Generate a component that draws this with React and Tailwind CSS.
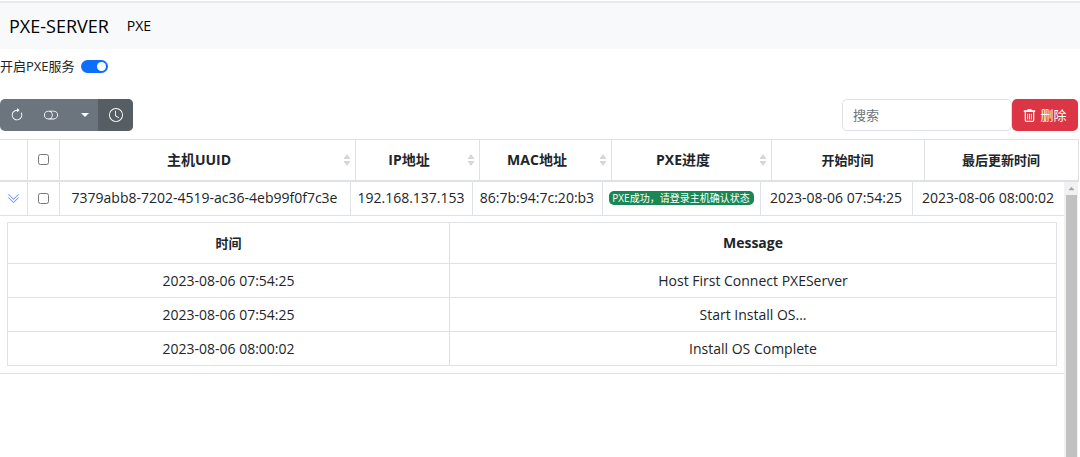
import { useState } from "react";
import {
  BsArrowClockwise,
  BsCaretUpFill,
  BsChevronDoubleDown,
  BsClock,
  BsToggleOff,
} from "react-icons/bs";

const columns = [
  { title: "主机UUID", sortable: true },
  { title: "IP地址", sortable: true },
  { title: "MAC地址", sortable: true },
  { title: "PXE进度", sortable: true },
  { title: "开始时间" },
  { title: "最后更新时间" },
];

const hosts = [
  {
    uuid: "7379abb8-7202-4519-ac36-4eb99f0f7c3e",
    ip: "192.168.137.153",
    mac: "86:7b:94:7c:20:b3",
    status: "PXE成功，请登录主机确认状态",
    start: "2023-08-06 07:54:25",
    update: "2023-08-06 08:00:02",
    logs: [
      { time: "2023-08-06 07:54:25", message: "Host First Connect PXEServer" },
      { time: "2023-08-06 07:54:25", message: "Start Install OS..." },
      { time: "2023-08-06 08:00:02", message: "Install OS Complete" },
    ],
  },
];

function SortIcon() {
  return (
    <svg viewBox="0 0 8 12" className="h-3 w-2 shrink-0 fill-[#d6d6d6]" aria-hidden="true">
      <path d="M4 0 7.5 5h-7zM4 12 .5 7h7z" />
    </svg>
  );
}

function TrashIcon() {
  return (
    <svg viewBox="0 0 13 13" className="size-[13px]" fill="none" stroke="currentColor" aria-hidden="true">
      <path d="M.8 2.2h11.4M4.5 1h4" strokeWidth="1.8" />
      <path d="M2.3 3v8.2q0 1.1 1.1 1.1h6.2q1.1 0 1.1-1.1V3" strokeWidth="1.2" />
      <path d="M4.6 4.8v5.6M6.5 4.8v5.6M8.4 4.8v5.6" strokeWidth="0.9" />
    </svg>
  );
}

function LogTable({ logs }) {
  return (
    <table className="w-full table-fixed border-collapse text-center">
      <colgroup>
        <col className="w-[442px]" />
        <col className="w-[607px]" />
      </colgroup>
      <thead>
        <tr className="h-[41px]">
          <th className="border border-[#dee2e6] text-[13px] font-bold">时间</th>
          <th className="border border-[#dee2e6] font-bold">Message</th>
        </tr>
      </thead>
      <tbody>
        {logs.map((log, index) => (
          <tr key={index} className="h-[34px]">
            <td className="border border-[#dee2e6]">{log.time}</td>
            <td className="border border-[#dee2e6]">{log.message}</td>
          </tr>
        ))}
      </tbody>
    </table>
  );
}

export default function App() {
  const [enabled, setEnabled] = useState(true);
  const [open, setOpen] = useState(true);
  const [search, setSearch] = useState("");

  return (
    <div className="flex min-h-screen flex-col bg-white pr-0.5 font-['Open_Sans','Noto_Sans_CJK_SC',sans-serif] text-[14px] leading-5 text-[#212529]">
      {/* Navbar */}
      <nav className="-mr-0.5 mt-px flex h-12 items-center gap-[18px] border-t-2 border-[#e9ecef] bg-[#f8f9fa] px-[9px]">
        <a href="#" className="text-[18px] text-black">PXE-SERVER</a>
        <a href="#" className="text-black">PXE</a>
      </nav>

      {/* Service switch */}
      <div className="flex h-[34px] items-center gap-1.5">
        <label htmlFor="pxe-service" className="text-[13px]">开启PXE服务</label>
        <input
          id="pxe-service"
          type="checkbox"
          role="switch"
          checked={enabled}
          onChange={(e) => setEnabled(e.target.checked)}
          className="flex h-[13px] w-[27px] appearance-none items-center justify-start rounded-full bg-gray-300 px-0.5 before:size-[9px] before:rounded-full before:bg-white checked:justify-end checked:bg-[#0d6efd]"
        />
      </div>

      {/* Toolbar */}
      <div className="mt-4 flex items-center justify-between">
        <div className="flex h-8 overflow-hidden rounded-[5px] bg-[#6c757d] text-white">
          <button aria-label="刷新" className="flex w-[34px] items-center justify-center">
            <BsArrowClockwise size={14} />
          </button>
          <button aria-label="切换视图" className="flex w-[34px] items-center justify-center">
            <BsToggleOff size={14} />
          </button>
          <button aria-label="列" className="flex w-[30px] items-center justify-center pl-1">
            <svg viewBox="0 0 8 4" className="h-1 w-2 fill-white" aria-hidden="true">
              <path d="M0 0h8L4 4z" />
            </svg>
          </button>
          <button aria-label="自动刷新" className="flex w-[35px] items-center justify-center bg-[#565e64]">
            <BsClock size={14} />
          </button>
        </div>
        <div className="flex h-8">
          <input
            type="search"
            aria-label="搜索"
            placeholder="搜索"
            value={search}
            onChange={(e) => setSearch(e.target.value)}
            className="w-[170px] rounded-[5px] border border-[#dee2e6] px-2.5 text-[13px] placeholder:text-[#6c757d]"
          />
          <button className="flex w-[66px] items-center justify-center gap-1 rounded-[5px] bg-[#dc3545] text-[13px] text-white">
            <TrashIcon />
            删除
          </button>
        </div>
      </div>

      {/* Fixed table header */}
      <table className="mt-2 w-full table-fixed border-collapse">
        <colgroup>
          <col className="w-[27px]" />
          <col className="w-[32px]" />
          <col className="w-[296px]" />
          <col className="w-[124px]" />
          <col className="w-[132px]" />
          <col className="w-[160px]" />
          <col className="w-[153px]" />
          <col className="w-[154px]" />
        </colgroup>
        <thead>
          <tr className="h-[41px] border-t border-b-2 border-[#dee2e6]">
            <th className="border-r border-[#dee2e6]"></th>
            <th className="border-r border-[#dee2e6]">
              <input type="checkbox" aria-label="全选" className="mx-auto block size-[11px]" />
            </th>
            {columns.map((col) => (
              <th key={col.title} className="border-r border-[#dee2e6] px-1 font-bold">
                <div className="flex items-center">
                  <span className={col.sortable ? "flex-1 pr-2" : "flex-1 text-[13px]"}>{col.title}</span>
                  {col.sortable && <SortIcon />}
                </div>
              </th>
            ))}
          </tr>
        </thead>
      </table>

      {/* Scrolling body */}
      <div className="flex flex-1">
        <div className="min-w-0 flex-1">
          <table className="w-full table-fixed border-collapse text-center">
            <colgroup>
              <col className="w-[27px]" />
              <col className="w-[32px]" />
              <col className="w-[291px]" />
              <col className="w-[122px]" />
              <col className="w-[130px]" />
              <col className="w-[158px]" />
              <col className="w-[152px]" />
              <col className="w-[152px]" />
            </colgroup>
            <tbody>
              {hosts.map((host) => [
                <tr key={host.uuid} className="h-[34px] border-b border-[#dee2e6]">
                  <td className="border-r border-[#dee2e6]">
                    <button
                      aria-label="展开"
                      onClick={() => setOpen(!open)}
                      className="mx-auto block text-[#5c85ff]"
                    >
                      <BsChevronDoubleDown size={13} />
                    </button>
                  </td>
                  <td className="border-r border-[#dee2e6]">
                    <input type="checkbox" aria-label={host.uuid} className="mx-auto block size-[11px]" />
                  </td>
                  <td className="border-r border-[#dee2e6]">{host.uuid}</td>
                  <td className="border-r border-[#dee2e6]">{host.ip}</td>
                  <td className="border-r border-[#dee2e6]">{host.mac}</td>
                  <td className="border-r border-[#dee2e6]">
                    <span className="mx-auto block h-3.5 w-[145px] rounded-[5px] bg-[#198754] text-[10px] leading-[14px] whitespace-nowrap text-white">
                      {host.status}
                    </span>
                  </td>
                  <td className="border-r border-[#dee2e6]">{host.start}</td>
                  <td className="border-r border-[#dee2e6]">{host.update}</td>
                </tr>,
                open && (
                  <tr key={host.uuid + "-detail"} className="border-b border-[#dee2e6]">
                    <td colSpan={8} className="border-r border-[#dee2e6] px-[7px] pt-1.5 pb-[7px]">
                      <LogTable logs={host.logs} />
                    </td>
                  </tr>
                ),
              ])}
            </tbody>
          </table>
        </div>

        {/* Scrollbar */}
        <div className="flex w-3.5 flex-col items-center bg-[#f1f1f1]">
          <span className="flex h-[13px] items-center">
            <BsCaretUpFill size={7} className="text-[#a3a3a3]" />
          </span>
          <span className="w-[11px] flex-1 bg-[#c1c1c1]" />
        </div>
      </div>
    </div>
  );
}
